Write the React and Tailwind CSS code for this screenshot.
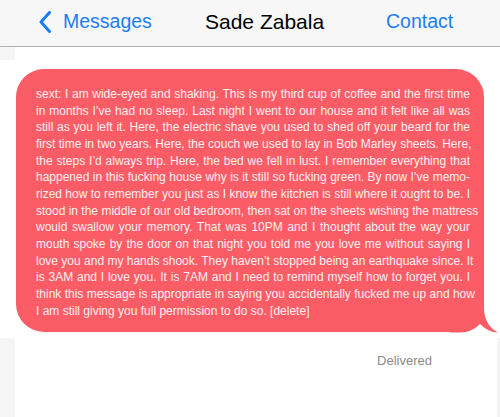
const lines = [
  'sext: I am wide-eyed and shaking. This is my third cup of coffee and the first time',
  'in months I’ve had no sleep. Last night I went to our house and it felt like all was',
  'still as you left it. Here, the electric shave you used to shed off your beard for the',
  'first time in two years. Here, the couch we used to lay in Bob Marley sheets. Here,',
  'the steps I’d always trip. Here, the bed we fell in lust. I remember everything that',
  'happened in this fucking house why is it still so fucking green. By now I’ve memo-',
  'rized how to remember you just as I know the kitchen is still where it ought to be. I',
  'stood in the middle of our old bedroom, then sat on the sheets wishing the mattress',
  'would swallow your memory. That was 10PM and I thought about the way your',
  'mouth spoke by the door on that night you told me you love me without saying I',
  'love you and my hands shook. They haven’t stopped being an earthquake since. It',
  'is 3AM and I love you. It is 7AM and I need to remind myself how to forget you. I',
  'think this message is appropriate in saying you accidentally fucked me up and how',
];

function Header() {
  return (
    <div className="h-[47px] bg-[#f7f7f7] border-b border-[#b2b2b2] flex items-center pb-[3px]">
      <div className="w-[205px] flex items-center pl-[39px]">
        <svg width="12" height="22" viewBox="0 0 12 22" className="shrink-0">
          <path d="M10.5 1.5 L2 11 L10.5 20.5" fill="none" stroke="#1a7df5" strokeWidth="3" strokeLinecap="round" strokeLinejoin="round" />
        </svg>
        <span className="ml-[12px] text-[19.5px] text-[#1a7df5]">Messages</span>
      </div>
      <div className="w-[181px] text-[21px] text-black">Sade Zabala</div>
      <div className="text-[19.5px] text-[#1a7df5]">Contact</div>
    </div>
  );
}

function Bubble() {
  return (
    <div className="relative ml-[16px] w-[468px] rounded-[28px] bg-[#fb5c66] pt-[17px] pb-[13px] pl-[20px] pr-[14px] text-[12px] text-white/90">
      {/* tail */}
      <svg className="absolute left-[434px] top-[231px]" width="50" height="33" viewBox="0 0 50 33">
        <path d="M34 0 L34 8 C34 20 40 29 48.5 32.5 C42 32.5 35 29 30 24 C25 29 18 32.5 10 32.5 L0 32.5 L0 0 Z" fill="#fb5c66" />
      </svg>
      <div className="relative">
        {lines.map((l, i) => (
          <div key={i} className="leading-[16.67px] whitespace-nowrap text-justify [text-align-last:justify]">{l}</div>
        ))}
        <div className="leading-[16.67px] whitespace-nowrap">I am still giving you full permission to do so. [delete]</div>
      </div>
    </div>
  );
}

export default function App() {
  return (
    <div className="w-[500px] h-[417px] overflow-hidden bg-white font-['Liberation_Sans',Arial,sans-serif]">
      <Header />
      <div className="h-[13px] flex">
        <div className="w-[15px] h-full bg-[#f5f5f5]" />
      </div>
      <div className="mt-[9px]">
        <Bubble />
      </div>
      <div className="mt-[6px] h-[79px] flex">
        <div className="w-[15px] h-full bg-[#f5f5f5]" />
        <div className="flex-1 flex justify-end pr-[65px] pt-[13px]">
          <span className="text-[13px] text-[#8a8a8a]">Delivered</span>
        </div>
        <div className="w-[3px] h-full bg-[#f3f3f3]" />
      </div>
    </div>
  );
}
